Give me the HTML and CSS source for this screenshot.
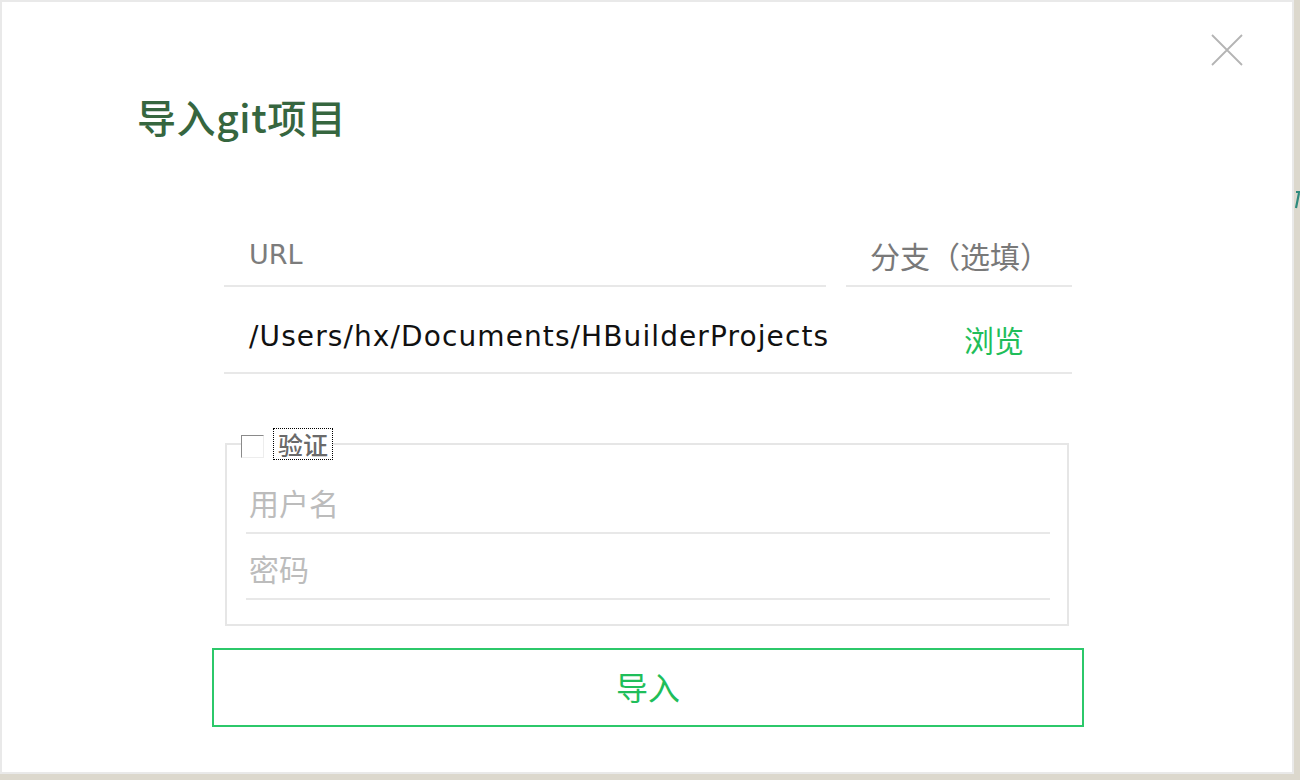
FILE: index.html
```html
<!DOCTYPE html>
<html lang="zh-CN">
<head>
<meta charset="utf-8">
<title>导入git项目</title>
<link rel="stylesheet" href="styles.css">
</head>
<body>
<div class="page">
  <div class="window">
    <div class="dialog">
      <button class="close" aria-label="关闭">
        <svg width="32" height="32" viewBox="0 0 32 32"><path d="M1 1 L31 31 M31 1 L1 31" stroke="#b4b4b4" stroke-width="1.8" fill="none"/></svg>
      </button>
      <h1 class="title">导入git项目</h1>
      <div class="form">
        <div class="row">
          <div class="field url"><span class="label">URL</span></div>
          <div class="field branch"><span class="label cjk">分支（选填）</span></div>
        </div>
        <div class="row path">
          <span class="path-text">/Users/hx/Documents/HBuilderProjects</span>
          <span class="browse">浏览</span>
        </div>
        <fieldset class="auth">
          <legend class="legend"><span class="check"></span><span class="check-label">验证</span></legend>
          <div class="sub first"><span class="ph">用户名</span></div>
          <div class="sub second"><span class="ph">密码</span></div>
        </fieldset>
        <button class="import">导入</button>
      </div>
    </div>
  </div>
  <div class="side">
    <svg width="6" height="24" viewBox="0 0 6 24"><path d="M2 4 H6 M5 5 L2 20" stroke="#2f8a7e" stroke-width="2.2" fill="none"/></svg>
  </div>
</div>
</body>
</html>
```
FILE: styles.css
```css
html, body {
  margin: 0;
  padding: 0;
}
body {
  width: 1300px;
  height: 780px;
  background: #dcd8cd;
  overflow: hidden;
  font-family: "Noto Sans CJK SC", "Noto Sans", sans-serif;
}
.page {
  display: flex;
  align-items: flex-start;
}
.window {
  width: 1290px;
  height: 770px;
  padding: 2px;
  background: #e9e9e9;
}
.dialog {
  position: relative;
  width: 1290px;
  height: 770px;
  background: #ffffff;
  box-sizing: border-box;
  padding-top: 93px;
}
.side {
  width: 6px;
  padding-top: 188px;
}
.side svg { display: block; }
.close {
  position: absolute;
  top: 32px;
  right: 49px;
  width: 32px;
  height: 32px;
  padding: 0;
  border: 0;
  background: none;
}
.close svg { display: block; }
.title {
  margin: 0 0 0 135px;
  font-size: 39px;
  line-height: 42px;
  font-weight: 500;
  color: #36663f;
  letter-spacing: 0.6px;
}
.form {
  width: 872px;
  margin: 100px 0 0 210px;
}
.row {
  display: flex;
  gap: 20px;
  margin: 0 12px;
}
.field {
  border-bottom: 2px solid #e8e8e8;
  padding-bottom: 12px;
}
.field.url { width: 602px; }
.field.branch { width: 226px; }
.label {
  display: block;
  padding-left: 25px;
  font-family: "DejaVu Sans", sans-serif;
  font-size: 27px;
  line-height: 36px;
  color: #7c7c7c;
}
.label.cjk {
  padding-left: 24px;
  font-family: "Noto Sans CJK SC", sans-serif;
  font-size: 30px;
  color: #797979;
}
.row.path {
  justify-content: space-between;
  border-bottom: 2px solid #e8e8e8;
  padding: 32px 0 15px 0;
}
.path-text {
  padding-left: 25px;
  font-family: "DejaVu Sans", sans-serif;
  font-size: 28px;
  line-height: 36px;
  color: #111111;
  letter-spacing: 1.1px;
}
.browse {
  padding-right: 48px;
  font-size: 30px;
  line-height: 36px;
  color: #1fbe5a;
  padding-top: 2px;
}
.auth {
  margin: 54px 15px 0 13px;
  padding: 0 17px 24px 19px;
  border: 2px solid #e6e6e6;
  min-width: 0;
}
.legend {
  margin-left: -5px;
  padding: 0;
  display: flex;
  align-items: center;
  height: 32px;
}
.check {
  width: 21px;
  height: 21px;
  border-top: 1px solid #8a8a8a;
  border-left: 1px solid #8a8a8a;
  border-right: 1px solid #ededed;
  border-bottom: 1px solid #ededed;
  background: #fff;
  margin-top: 4px;
}
.check-label {
  margin-left: 9px;
  padding: 0 4px;
  height: 30px;
  border: 1px dotted #000;
  font-size: 25px;
  font-weight: 500;
  line-height: 30px;
  color: #6a6a6a;
}
.sub {
  border-bottom: 2px solid #e8e8e8;
  padding-bottom: 12px;
}
.sub.first { margin-top: 24px; }
.sub.second { padding-top: 16px; }
.ph {
  display: block;
  padding-left: 3px;
  font-size: 30px;
  line-height: 36px;
  color: #bcbcbc;
}
.import {
  display: block;
  width: 872px;
  height: 79px;
  margin-top: 22px;
  border: 2px solid #2cc86a;
  background: #ffffff;
  font-family: "Noto Sans CJK SC", sans-serif;
  font-size: 32px;
  color: #1fbe5a;
  padding: 0 0 4px 0;
}
```
